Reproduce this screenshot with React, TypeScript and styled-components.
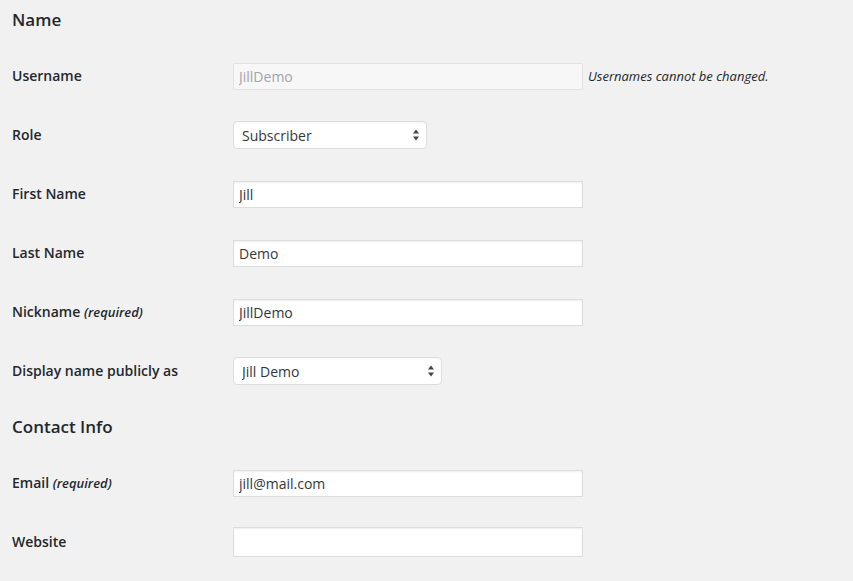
import React from 'react';
import styled, { createGlobalStyle } from 'styled-components';

const GlobalStyle = createGlobalStyle`
  html, body {
    margin: 0;
    padding: 0;
    background: #f1f1f1;
  }
  body {
    font-family: 'Open Sans', 'Noto Sans', sans-serif;
    font-size: 14px;
    color: #23282d;
  }
`;

const Page = styled.div`
  padding: 0 12px;
  min-height: 581px;
  box-sizing: border-box;
`;

const SectionTitle = styled.h2<{ $first?: boolean }>`
  margin: 0;
  padding: ${(p) => (p.$first ? '8px 0 15px' : '15px 0 15px')};
  font-size: 17px;
  line-height: 23px;
  font-weight: 600;
  color: #23282d;
`;

const Row = styled.div`
  display: grid;
  grid-template-columns: 221px 1fr;
  align-items: center;
  height: 59px;
`;

const Label = styled.label`
  padding-top: 2px;
  font-size: 14px;
  font-weight: 600;
  line-height: 1.3;
  color: #23282d;
`;

const Required = styled.span`
  font-size: 13px;
  font-style: italic;
  font-weight: 600;
  color: #23282d;
`;

const Field = styled.div`
  display: flex;
  align-items: center;
  padding-top: 1px;
`;

const TextInput = styled.input<{ $tall?: boolean }>`
  box-sizing: border-box;
  width: 350px;
  height: ${(p) => (p.$tall ? '30px' : '27px')};
  margin: 0;
  padding: 0 5px;
  border: 1px solid #ddd;
  border-radius: 0;
  background: #fff;
  box-shadow: inset 0 1px 2px rgba(0, 0, 0, 0.07);
  font-family: 'Open Sans', 'Noto Sans', sans-serif;
  font-size: 14px;
  color: #32373c;
  outline: none;

  &:disabled {
    background: #f7f7f7;
    border-color: #e2e2e2;
    color: #a0a5aa;
    box-shadow: none;
  }
`;

const Description = styled.span`
  margin-left: 5px;
  font-size: 13px;
  font-style: italic;
  color: #23282d;
`;

const SelectWrap = styled.div<{ $width: number }>`
  position: relative;
  width: ${(p) => p.$width}px;
`;

const Select = styled.select`
  box-sizing: border-box;
  width: 100%;
  height: 28px;
  margin: 0;
  padding: 0 24px 0 8px;
  border: 1px solid #ddd;
  border-radius: 4px;
  background: #fff;
  box-shadow: inset 0 1px 2px rgba(0, 0, 0, 0.04);
  appearance: none;
  -webkit-appearance: none;
  font-family: 'Open Sans', 'Noto Sans', sans-serif;
  font-size: 14px;
  color: #32373c;
  outline: none;
`;

const Arrows = styled.svg`
  position: absolute;
  right: 8px;
  top: 50%;
  transform: translateY(-50%);
  pointer-events: none;
`;

const SelectArrows = () => (
  <Arrows width="6" height="12" viewBox="0 0 6 12">
    <path d="M3 0.5 L6 4.5 L0 4.5 Z" fill="#444" />
    <path d="M0 7.5 L6 7.5 L3 11.5 Z" fill="#444" />
  </Arrows>
);

interface DropdownProps {
  width: number;
  value: string;
  options: string[];
}

const Dropdown: React.FC<DropdownProps> = ({ width, value, options }) => (
  <SelectWrap $width={width}>
    <Select defaultValue={value}>
      {options.map((o) => (
        <option key={o} value={o}>
          {o}
        </option>
      ))}
    </Select>
    <SelectArrows />
  </SelectWrap>
);

const App: React.FC = () => {
  return (
    <>
      <GlobalStyle />
      <Page>
        <SectionTitle $first>Name</SectionTitle>

        <Row>
          <Label htmlFor="user_login">Username</Label>
          <Field>
            <TextInput id="user_login" defaultValue="JillDemo" disabled />
            <Description>Usernames cannot be changed.</Description>
          </Field>
        </Row>

        <Row>
          <Label htmlFor="role">Role</Label>
          <Field>
            <Dropdown
              width={194}
              value="Subscriber"
              options={['Subscriber', 'Contributor', 'Author', 'Editor', 'Administrator']}
            />
          </Field>
        </Row>

        <Row>
          <Label htmlFor="first_name">First Name</Label>
          <Field>
            <TextInput id="first_name" defaultValue="Jill" />
          </Field>
        </Row>

        <Row>
          <Label htmlFor="last_name">Last Name</Label>
          <Field>
            <TextInput id="last_name" defaultValue="Demo" />
          </Field>
        </Row>

        <Row>
          <Label htmlFor="nickname">
            Nickname <Required>(required)</Required>
          </Label>
          <Field>
            <TextInput id="nickname" defaultValue="JillDemo" />
          </Field>
        </Row>

        <Row>
          <Label htmlFor="display_name">Display name publicly as</Label>
          <Field>
            <Dropdown width={209} value="Jill Demo" options={['JillDemo', 'Jill', 'Demo', 'Jill Demo', 'Demo Jill']} />
          </Field>
        </Row>

        <SectionTitle>Contact Info</SectionTitle>

        <Row>
          <Label htmlFor="email">
            Email <Required>(required)</Required>
          </Label>
          <Field>
            <TextInput id="email" type="email" defaultValue="jill@mail.com" />
          </Field>
        </Row>

        <Row>
          <Label htmlFor="url">Website</Label>
          <Field>
            <TextInput id="url" type="url" defaultValue="" $tall />
          </Field>
        </Row>
      </Page>
    </>
  );
};

export default App;
